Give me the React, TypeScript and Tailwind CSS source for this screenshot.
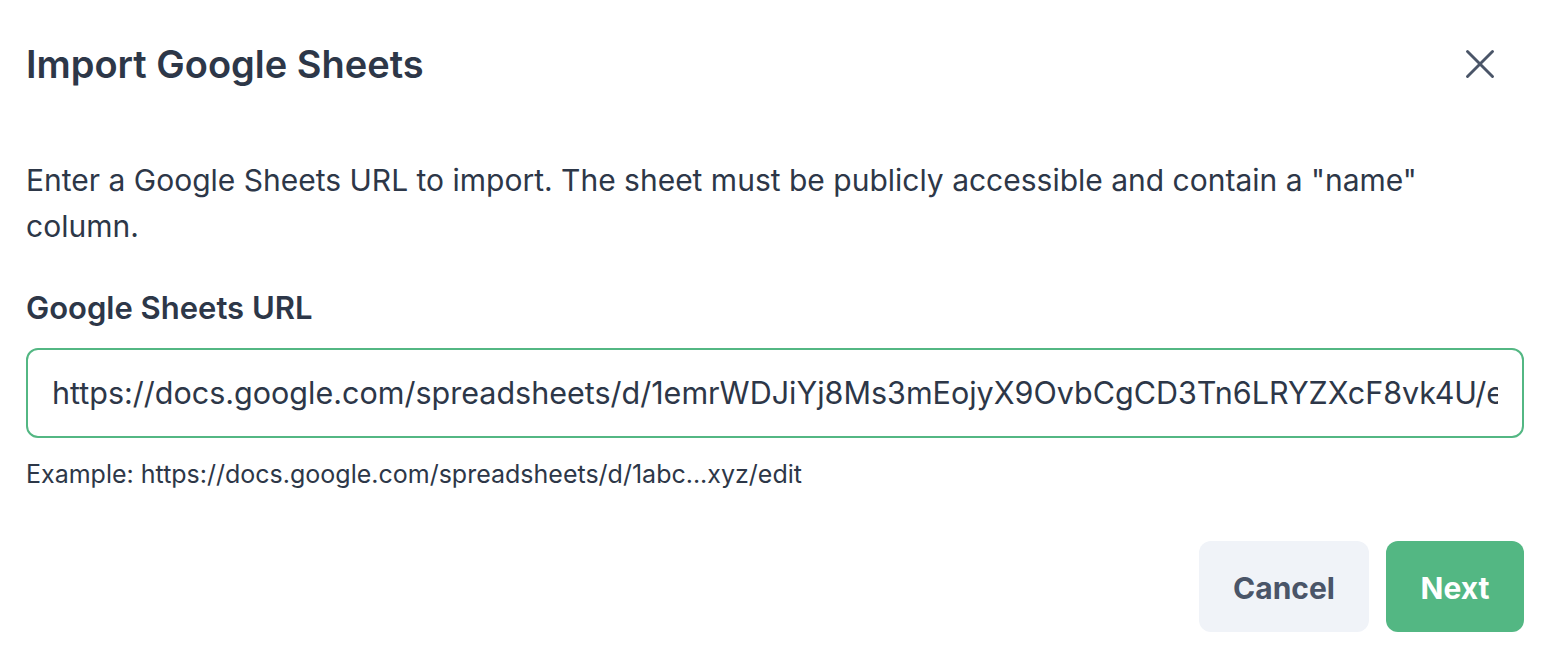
import { X } from "lucide-react";

const url =
  "https://docs.google.com/spreadsheets/d/1emrWDJiYj8Ms3mEojyX9OvbCgCD3Tn6LRYZXcF8vk4U/edit?usp=sharing";

const App = () => {
  return (
    <div className="w-[1550px] h-[652px] bg-white text-[#2d3748] font-['Inter',sans-serif] overflow-hidden">
      <div className="flex items-center justify-between pl-[26px] pr-[45px] pt-[38px]">
        <h2 className="text-[38px] leading-[52px] font-semibold">Import Google Sheets</h2>
        <button className="flex items-center justify-center w-[50px] h-[50px] text-[#4a5568]">
          <X size={50} strokeWidth={1.4} />
        </button>
      </div>

      <div className="px-[26px] pt-[67px]">
        <p className="text-[30px] leading-[46px]">
          Enter a Google Sheets URL to import. The sheet must be publicly accessible and contain a "name"
          column.
        </p>

        <div className="mt-[39px]">
          <label className="block text-[31px] leading-[40px] font-semibold">Google Sheets URL</label>
          <div className="mt-[20px] h-[90px] w-full rounded-[12px] border-2 border-[#53b783] flex items-center px-[24px] overflow-hidden">
            <input
              readOnly
              value={url}
              className="w-full bg-transparent outline-none text-[30.5px] text-[#2d3748] font-['Inter',sans-serif]"
            />
          </div>
          <p className="mt-[20px] text-[25px] leading-[32px]">
            Example: https://docs.google.com/spreadsheets/d/1abc...xyz/edit
          </p>
        </div>

        <div className="flex justify-end gap-[17px] mt-[51px]">
          <button className="w-[170px] h-[91px] pt-[3px] rounded-[12px] bg-[#f0f3f8] text-[#4a5568] text-[30px] font-bold">
            Cancel
          </button>
          <button className="w-[138px] h-[91px] pt-[3px] rounded-[12px] bg-[#53b783] text-white text-[30px] font-bold">
            Next
          </button>
        </div>
      </div>
    </div>
  );
};

export default App;
